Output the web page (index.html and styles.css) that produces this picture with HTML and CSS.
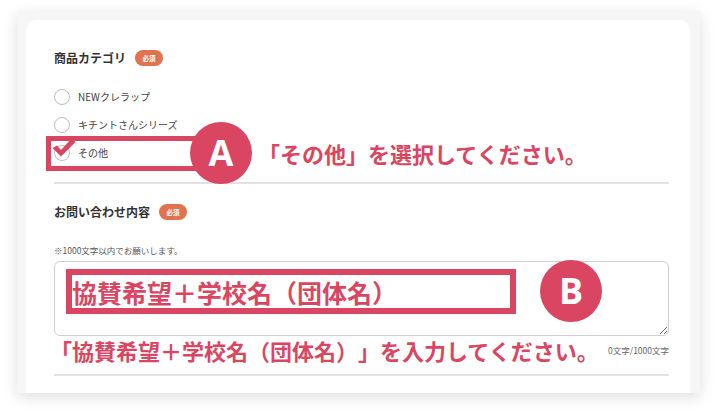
FILE: index.html
```html
<!DOCTYPE html>
<html lang="ja">
<head>
<meta charset="utf-8">
<title>フォーム入力例</title>
<link rel="stylesheet" href="styles.css">
</head>
<body>
<div class="frame">
  <div class="card">
    <section class="field">
      <div class="field-head">
        <h2 class="field-title">商品カテゴリ</h2>
        <span class="badge">必須</span>
      </div>
      <ul class="radios">
        <li class="radio-item"><span class="radio"></span><span class="radio-label">NEWクレラップ</span></li>
        <li class="radio-item"><span class="radio"></span><span class="radio-label">キチントさんシリーズ</span></li>
        <li class="radio-item checked">
          <span class="radio"></span>
          <svg class="check" width="24" height="20" viewBox="0 0 24 20"><polygon points="0.5,10 5,7.5 9,12 19.5,0.5 23.5,4 9,18.5" fill="#da4661"/></svg>
          <span class="radio-label">その他</span>
        </li>
      </ul>
    </section>
    <hr class="divider">
    <section class="field">
      <div class="field-head">
        <h2 class="field-title">お問い合わせ内容</h2>
        <span class="badge">必須</span>
      </div>
      <p class="note">※1000文字以内でお願いします。</p>
      <textarea class="textarea"></textarea>
      <div class="counter">0文字/1000文字</div>
    </section>
    <hr class="divider">

    <div class="mark mark-a"></div>
    <div class="circle circle-a">A</div>
    <div class="hint hint-a">「その他」を選択してください。</div>

    <div class="mark mark-b"></div>
    <div class="hint hint-box">協賛希望＋学校名（団体名）</div>
    <div class="circle circle-b">B</div>
    <div class="hint hint-c">「協賛希望＋学校名（団体名）」を入力してください。</div>
  </div>
</div>
</body>
</html>
```
FILE: styles.css
```css
* { box-sizing: border-box; }
html, body {
  margin: 0;
  padding: 0;
  background: #ffffff;
  width: 718px;
  height: 418px;
  overflow: hidden;
  font-family: "Noto Sans CJK JP", "Noto Sans", sans-serif;
}
.frame {
  margin: 11px 18px 0 17px;
  width: 683px;
  height: 382px;
  background: #f6f6f6;
  box-shadow: 0 4px 14px rgba(0, 0, 0, 0.13);
  padding: 9px 10px 0 9px;
  overflow: hidden;
}
.card {
  position: relative;
  height: 100%;
  background: #ffffff;
  border-radius: 10px 10px 0 0;
  padding: 30px 21px 0 28px;
}
.field-head {
  display: flex;
  align-items: center;
  gap: 9px;
  height: 16px;
}
.field-title {
  margin: 0;
  font-size: 12px;
  font-weight: 700;
  color: #333333;
  line-height: 16px;
}
.badge {
  width: 28px;
  height: 16px;
  border-radius: 8px;
  background: #e0724e;
  color: #ffffff;
  font-size: 6.5px;
  font-weight: 700;
  display: flex;
  align-items: center;
  justify-content: center;
}
.radios {
  list-style: none;
  margin: 17px 0 0 0;
  padding: 0;
}
.radio-item {
  position: relative;
  display: flex;
  align-items: center;
  gap: 8px;
  height: 28px;
}
.radio {
  width: 16px;
  height: 16px;
  border-radius: 50%;
  border: 1.5px solid #bdbdbd;
  background: #ffffff;
}
.radio-label {
  font-size: 10px;
  color: #444444;
  line-height: 14px;
}
.check {
  position: absolute;
  left: -2px;
  top: -1px;
}
.divider {
  margin: 15px 0 0 0;
  border: 0;
  height: 2px;
  background: #e2e2e2;
}
.divider + .field { margin-top: 20px; }
.note {
  margin: 24px 0 0 0;
  font-size: 8.5px;
  line-height: 12px;
  color: #555555;
}
.textarea {
  display: block;
  margin: 5px 0 0 0;
  width: 100%;
  height: 75px;
  border: 1px solid #cfcfcf;
  border-radius: 6px;
  background: #ffffff;
  resize: vertical;
  font-family: inherit;
}
.counter {
  text-align: right;
  font-size: 8.5px;
  line-height: 12px;
  color: #666666;
  margin-top: 8px;
}
section.field:last-of-type + .divider { margin-top: 18px; }

/* annotations */
.mark {
  position: absolute;
  border: 5px solid #da4661;
}
.mark-a { left: 20px; top: 116px; width: 160px; height: 35px; }
.mark-b { left: 40px; top: 249px; width: 450px; height: 45px; border-width: 6px; }
.circle {
  position: absolute;
  width: 62px;
  height: 62px;
  border-radius: 50%;
  background: #da4661;
  color: #ffffff;
  font-family: "Open Sans", "Liberation Sans", sans-serif;
  font-weight: 700;
  font-size: 36px;
  line-height: 62px;
  text-align: center;
}
.circle-a { left: 164px; top: 102px; }
.circle-b { left: 514px; top: 240px; }
.hint {
  position: absolute;
  color: #da4661;
  font-weight: 700;
  white-space: nowrap;
  line-height: 30px;
  text-spacing-trim: space-all;
  font-feature-settings: "palt" 0;
}
.hint-a { left: 232px; top: 118px; font-size: 22px; }
.hint-box { left: 46px; top: 257px; font-size: 25px; }
.hint-c { left: 24px; top: 315px; font-size: 22px; }
```
